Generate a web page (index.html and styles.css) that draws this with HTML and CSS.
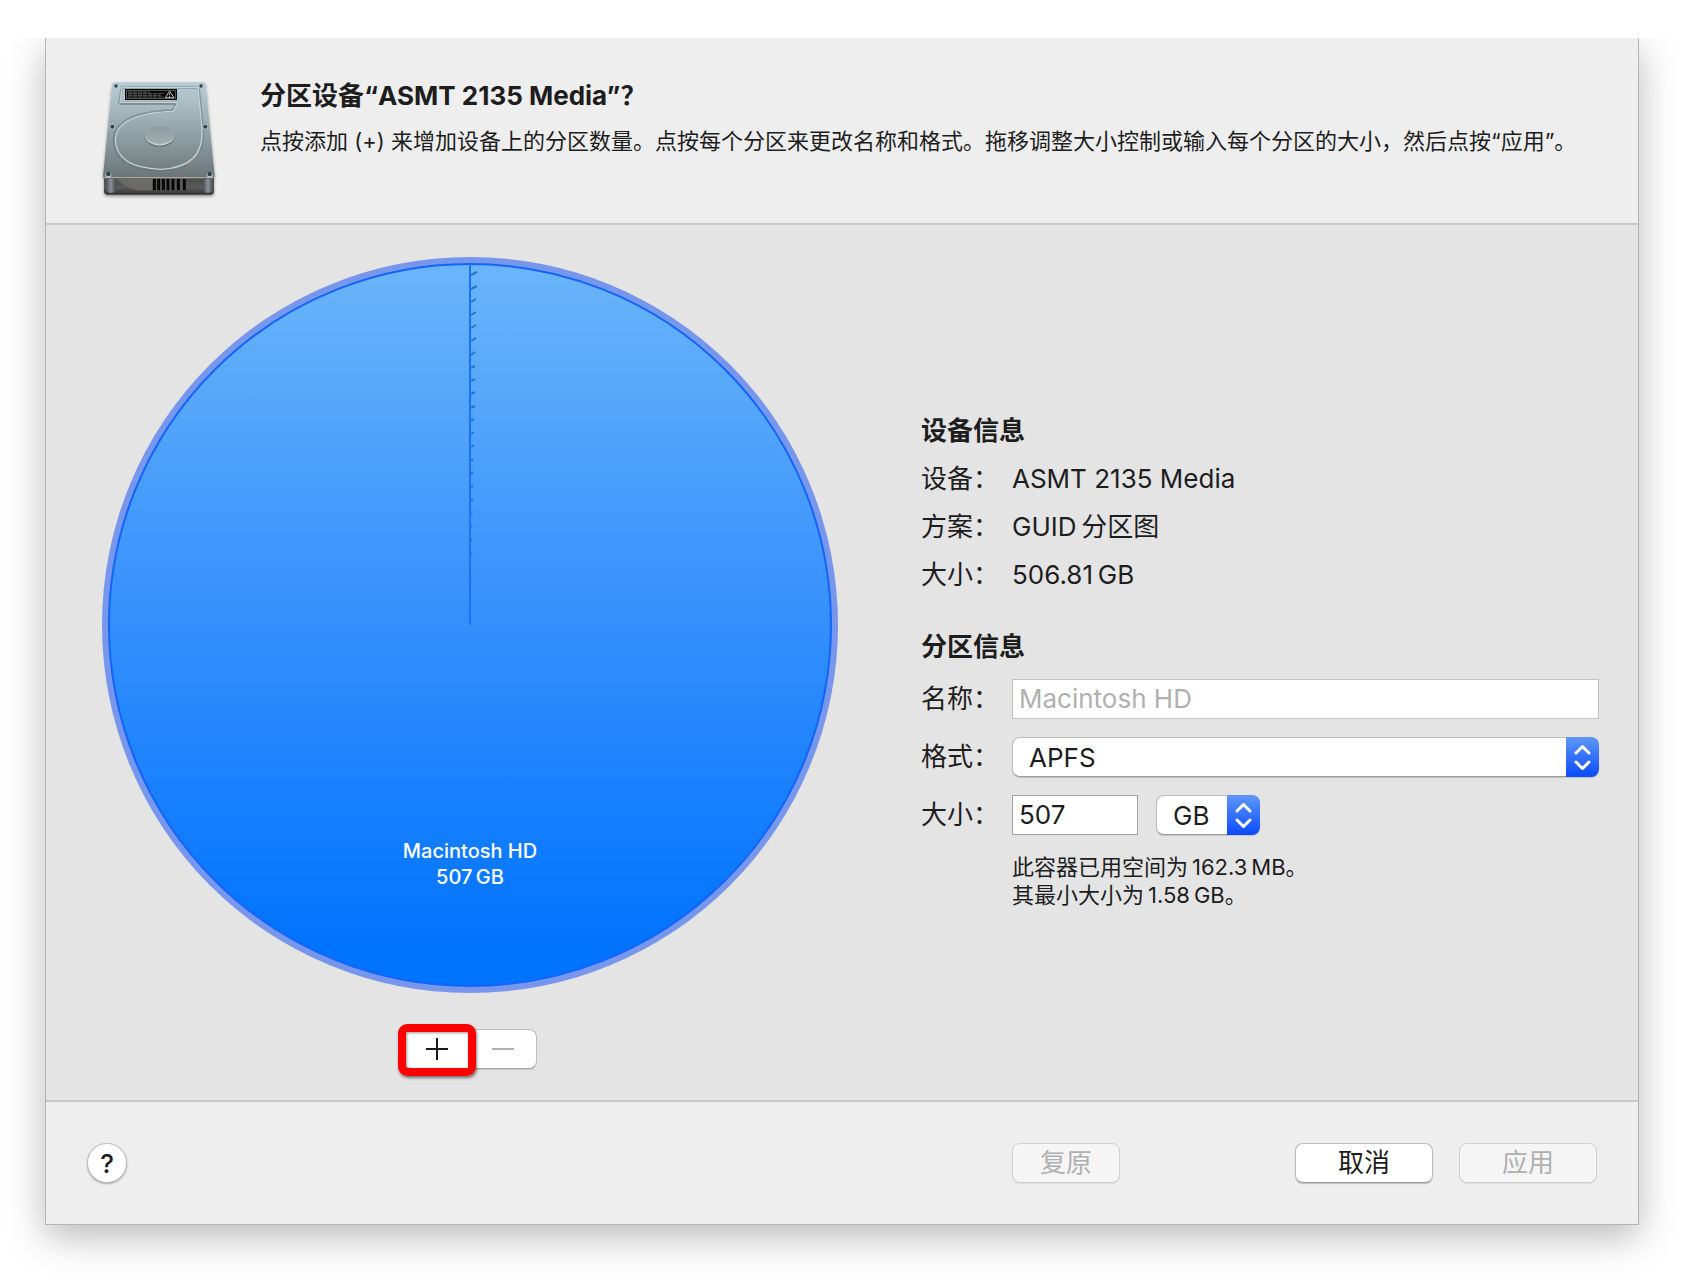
FILE: index.html
```html
<!DOCTYPE html>
<html lang="zh-CN">
<head>
<meta charset="utf-8">
<meta name="viewport" content="width=device-width, initial-scale=1">
<title>分区设备</title>
<link rel="stylesheet" href="styles.css">
</head>
<body>
<main class="sheet">
  <header class="sheet-header">
    <svg class="drive-icon" viewBox="30 30 360 360" aria-hidden="true">
      <defs>
        <linearGradient id="plate" x1="0" y1="0" x2="0" y2="1">
          <stop offset="0" stop-color="#b5ced6"/>
          <stop offset=".25" stop-color="#a9bbc1"/>
          <stop offset=".65" stop-color="#87979b"/>
          <stop offset="1" stop-color="#6b7476"/>
        </linearGradient>
        <linearGradient id="front" x1="0" y1="0" x2="0" y2="1">
          <stop offset="0" stop-color="#4a4a4b"/>
          <stop offset=".6" stop-color="#5a5a5b"/>
          <stop offset="1" stop-color="#323233"/>
        </linearGradient>
        <linearGradient id="post" x1="0" y1="0" x2="1" y2="0">
          <stop offset="0" stop-color="#4c5258"/>
          <stop offset=".5" stop-color="#8b9198"/>
          <stop offset="1" stop-color="#4a4d52"/>
        </linearGradient>
        <linearGradient id="hub" x1="0" y1="0" x2="0" y2="1">
          <stop offset="0" stop-color="#8e9ca1"/>
          <stop offset="1" stop-color="#a0adb1"/>
        </linearGradient>
        <filter id="soft" x="-10%" y="-10%" width="120%" height="125%">
          <feDropShadow dx="0" dy="5" stdDeviation="5" flood-color="#000" flood-opacity=".4"/>
        </filter>
      </defs>
      <g filter="url(#soft)">
        <path d="M42 322H372V364Q372 374 362 374H52Q42 374 42 364Z" fill="url(#front)"/>
        <path d="M74 37H338Q346 37 347 45L374 318Q374 325 368 325H44Q38 325 39 318L66 45Q67 37 74 37Z" fill="url(#plate)"/>
      </g>
      <path d="M80 326H190V361H140Q100 350 80 326Z" fill="#6b6a69"/>
      <rect x="48" y="326" width="29" height="42" rx="10" fill="url(#post)"/>
      <rect x="340" y="326" width="28" height="42" rx="10" fill="url(#post)"/>
      <path d="M40 323H373" stroke="#b5b0a6" stroke-width="3"/>
      <path d="M188 327H290V362H188Z" fill="#59595a"/>
      <path d="M193 327V361M206 327V361M220 327V361M234 327V361M249 327V361M265 327V361M283 327V361" stroke="#070707" stroke-width="9"/>
      <path d="M96 52H326L338 180Q344 296 212 302Q74 298 72 210Q76 128 248 122L262 99H88Z" fill="none" stroke="#64747a" stroke-width="8" opacity=".55"/>
      <path d="M96 52H324L336 180Q342 292 212 298Q78 294 76 208Q80 130 250 124L264 98H90Z" fill="none" stroke="#c5d2d6" stroke-width="4"/>
      <path d="M90 102H257" stroke="#667478" stroke-width="3"/>
      <ellipse cx="209" cy="200" rx="45" ry="30" fill="#5c6669"/>
      <ellipse cx="209" cy="198" rx="44" ry="29" fill="#c6cdd0"/>
      <ellipse cx="209" cy="195" rx="43" ry="27" fill="url(#hub)"/>
      <path d="M292 284Q318 268 328 244" fill="none" stroke="#b99591" stroke-width="4" opacity=".6"/>
      <rect x="105" y="57" width="156" height="33" fill="#050505"/>
      <rect x="110" y="61" width="146" height="25" fill="none" stroke="#777" stroke-width="2"/>
      <path d="M114 66H180M114 71H222M114 76H212M114 81H222" stroke="#8c8c8c" stroke-width="2" stroke-dasharray="13 2"/>
      <path d="M239 63L226 83H252ZM239 69V76M239 78V81" fill="none" stroke="#bbb" stroke-width="3"/>
      <g fill="#b9c9ce">
        <circle cx="78" cy="49" r="8"/><circle cx="333" cy="49" r="8"/>
        <circle cx="67" cy="171" r="8"/><circle cx="346" cy="171" r="8"/>
        <circle cx="55" cy="314" r="9"/><circle cx="359" cy="314" r="9"/>
      </g>
      <g fill="#2c4149">
        <circle cx="78" cy="48" r="5"/><circle cx="333" cy="48" r="5"/>
        <circle cx="67" cy="170" r="6"/><circle cx="346" cy="170" r="6"/>
        <circle cx="55" cy="312" r="7"/><circle cx="359" cy="312" r="7"/>
      </g>
    </svg>
    <div class="header-text">
      <h1 class="title">分区设备“ASMT 2135 Media”？</h1>
      <p class="description">点按添加 (+) 来增加设备上的分区数量。点按每个分区来更改名称和格式。拖移调整大小控制或输入每个分区的大小，然后点按“应用”。</p>
    </div>
  </header>

  <section class="content">
    <div class="chart-column">
      <svg class="pie" viewBox="0 0 736 736" role="img" aria-label="Macintosh HD 507 GB">
        <defs>
          <linearGradient id="disk" x1="0" y1="0" x2="0" y2="1">
            <stop offset="0" stop-color="#6ab5fa"/>
            <stop offset=".5" stop-color="#348ffc"/>
            <stop offset=".95" stop-color="#0073ff"/>
            <stop offset="1" stop-color="#0073ff"/>
          </linearGradient>
        </defs>
        <circle cx="368" cy="368" r="368" fill="#7697ec"/>
        <circle cx="368" cy="368" r="361" fill="url(#disk)" stroke="#1464fa" stroke-width="2"/>
        <path d="M368 7V368" stroke="#1a72fb" stroke-width="2"/>
        <path class="ticks" d="M369 18l6-3M369 32l6-3M369 45l5-3M369 58l5-3M369 71l5-3M369 84l5-3M369 98l4-3M369 111l4-2M369 124l4-2M369 137l4-2M369 151l4-2M369 164l3-2M369 177l3-2M369 190l3-2M369 204l2-2M369 217l2-2M369 230l2-1M369 243l2-1M369 257l1-1M369 270l1-1M369 283l1-1M369 297l1-1"/>
        <text class="pie-label" x="368" y="601">Macintosh HD</text>
        <text class="pie-label" x="368" y="627">507&#8201;GB</text>
      </svg>
      <div class="segmented">
        <button class="segment segment-add" type="button" aria-label="添加分区">
          <svg class="glyph" viewBox="0 0 22 22" aria-hidden="true"><path d="M11 0V22M0 11H22"/></svg>
        </button>
        <button class="segment segment-remove" type="button" aria-label="移除分区" disabled>
          <svg class="glyph" viewBox="0 0 22 22" aria-hidden="true"><path d="M0 11H22"/></svg>
        </button>
      </div>
    </div>

    <div class="info-column">
      <section class="device-info">
        <h2 class="group-title">设备信息</h2>
        <dl class="facts">
          <dt>设备：</dt><dd>ASMT 2135 Media</dd>
          <dt>方案：</dt><dd>GUID&#8201;分区图</dd>
          <dt>大小：</dt><dd>506.81&#8201;GB</dd>
        </dl>
      </section>
      <form class="partition-info">
        <h2 class="group-title">分区信息</h2>
        <div class="fields">
          <label for="name">名称：</label>
          <input class="text-field" id="name" type="text" value="Macintosh HD" disabled>
          <label for="format">格式：</label>
          <div class="popup">
            <select class="popup-select" id="format"><option>APFS</option></select>
            <svg class="stepper" viewBox="0 0 33 40" aria-hidden="true"><path d="M10 16L16.500 9.500L23 16M10 25L16.500 31.500L23 25"/></svg>
          </div>
          <label for="size">大小：</label>
          <div class="size-row">
            <input class="text-field size-field" id="size" type="text" value="507">
            <div class="popup unit-popup">
              <select class="popup-select" aria-label="单位"><option>GB</option></select>
              <svg class="stepper" viewBox="0 0 33 40" aria-hidden="true"><path d="M10 16L16.500 9.500L23 16M10 25L16.500 31.500L23 25"/></svg>
            </div>
          </div>
          <p class="note">此容器已用空间为&#8201;162.3&#8201;MB。<br>其最小大小为&#8201;1.58&#8201;GB。</p>
        </div>
      </form>
    </div>
  </section>

  <footer class="sheet-footer">
    <button class="help" type="button" aria-label="帮助">?</button>
    <button class="button button-revert" type="button" disabled>复原</button>
    <button class="button" type="button">取消</button>
    <button class="button" type="button" disabled>应用</button>
  </footer>
</main>
</body>
</html>
```
FILE: styles.css
```css
* {
  box-sizing: border-box;
}

body {
  margin: 0;
  padding: 38px 45px 52px;
  background: #fff;
  color: #1d1d1d;
  font-family: Inter, "Noto Sans CJK SC", sans-serif;
  font-size: 26px;
  clip-path: inset(38px 0 0);
}

h1, h2, p, dl, dd {
  margin: 0;
}

button, input, select {
  font: inherit;
  color: inherit;
}

.sheet {
  background: #eee;
  border: 1px solid #b4b4b4;
  border-top: 0;
  box-shadow: 0 12px 36px rgba(0, 0, 0, .28);
}

.sheet-header {
  display: flex;
  gap: 40px;
  padding: 42px 40px 23px 54px;
  border-bottom: 2px solid #c8c8c8;
}

.drive-icon {
  flex: none;
  width: 120px;
  height: 120px;
}

.title {
  font-size: 26px;
  line-height: 32px;
  font-weight: 700;
}

.description {
  margin-top: 15px;
  font-size: 22px;
  line-height: 28px;
}

.content {
  display: grid;
  grid-template-columns: minmax(0, 736px) minmax(0, 1fr);
  column-gap: 83px;
  padding: 32px 39px 31px 56px;
  background: #e4e4e4;
  border-bottom: 2px solid #c8c8c8;
}

.chart-column {
  display: flex;
  flex-direction: column;
  align-items: center;
  gap: 36px;
}

.pie {
  display: block;
  width: 100%;
}

.ticks {
  fill: none;
  stroke: #2474c8;
  stroke-width: 2;
}

.pie-label {
  fill: #fff;
  font-size: 20px;
  font-weight: 500;
  text-anchor: middle;
}

.segmented {
  display: flex;
  width: 134px;
  height: 40px;
  background: #fff;
  border: 1px solid #bdbdbd;
  border-bottom-color: #a8a8a8;
  border-radius: 8px;
  box-shadow: 0 1px 1px rgba(0, 0, 0, .12);
}

.segment {
  position: relative;
  display: flex;
  flex: 1;
  align-items: center;
  justify-content: center;
  padding: 0;
  background: none;
  border: 0;
}

.segment-add::after {
  content: "";
  position: absolute;
  inset: -6px -6px -8px;
  border: 8px solid #f00;
  border-radius: 9px;
  box-shadow: 1px 2px 3px rgba(0, 0, 0, .5), inset 1px 1px 3px rgba(0, 0, 0, .4);
}

.glyph {
  width: 22px;
  height: 22px;
  fill: none;
  stroke: #1a1a1a;
  stroke-width: 2;
}

.segment-remove .glyph {
  stroke: #b0b0b0;
}

.info-column {
  display: flex;
  flex-direction: column;
  justify-content: center;
  gap: 24px;
  padding-bottom: 10px;
}

.group-title {
  font-size: 26px;
  line-height: 48px;
  font-weight: 700;
}

.facts,
.fields {
  display: grid;
  grid-template-columns: 91px minmax(0, 1fr);
}

.facts {
  line-height: 48px;
}

.fields {
  row-gap: 18px;
  margin-top: 8px;
  line-height: 40px;
}

.text-field {
  width: 100%;
  height: 40px;
  padding: 0 6px;
  background: #fff;
  border: 1px solid #a0a0a0;
  border-radius: 0;
}

.text-field:disabled {
  border-color: #c2c2c2;
  color: #b0b0b0;
}

.popup {
  display: grid;
  height: 40px;
}

.popup-select,
.stepper {
  grid-area: 1 / 1;
}

.popup-select {
  width: 100%;
  height: 40px;
  padding: 0 33px 2px 16px;
  appearance: none;
  background: #fff;
  border: 1px solid #bdbdbd;
  border-bottom-color: #9c9c9c;
  border-radius: 8px;
  box-shadow: 0 1px 1px rgba(0, 0, 0, .15);
}

.stepper {
  z-index: 1;
  justify-self: end;
  width: 33px;
  height: 40px;
  background: linear-gradient(#5f97f8, #0a4bff);
  border-radius: 0 8px 8px 0;
  fill: none;
  stroke: #fff;
  stroke-width: 3;
  stroke-linecap: round;
  stroke-linejoin: round;
  pointer-events: none;
}

.size-row {
  display: flex;
  gap: 18px;
}

.size-field {
  width: 126px;
}

.unit-popup {
  width: 104px;
}

.note {
  grid-column: 2;
  font-size: 22px;
  line-height: 28px;
}

.sheet-footer {
  display: flex;
  gap: 26px;
  padding: 41px;
}

.help {
  width: 40px;
  height: 40px;
  margin-right: auto;
  padding: 0;
  background: #fff;
  border: 1px solid #bdbdbd;
  border-radius: 50%;
  box-shadow: 0 1px 2px rgba(0, 0, 0, .3);
  font-weight: 500;
}

.button {
  width: 138px;
  height: 40px;
  padding: 0;
  background: #fff;
  border: 1px solid #bdbdbd;
  border-bottom-color: #9c9c9c;
  border-radius: 8px;
  box-shadow: 0 1px 1px rgba(0, 0, 0, .2);
  font-size: 26px;
  line-height: 36px;
}

.button:disabled {
  background: #f5f5f5;
  border-color: #d0d0d0;
  color: #b0b0b0;
  box-shadow: 0 1px 1px rgba(0, 0, 0, .08);
}

.button-revert {
  width: 108px;
  margin-right: 149px;
}
```
